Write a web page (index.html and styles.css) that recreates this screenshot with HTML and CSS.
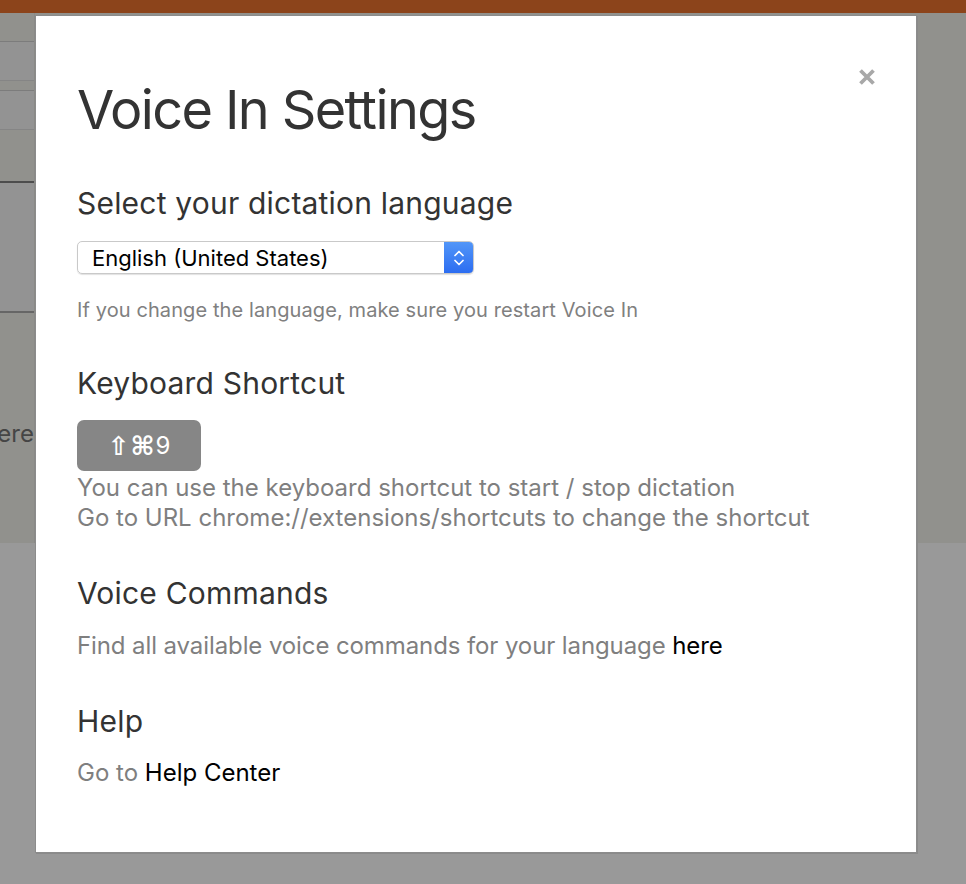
FILE: index.html
```html
<!DOCTYPE html>
<html lang="en">
<head>
<meta charset="utf-8">
<title>Voice In Settings</title>
<link rel="stylesheet" href="styles.css">
</head>
<body>
<div class="topbar"></div>
<div class="page">
  <div class="hero">
    <div class="side">
      <div class="field f1"></div>
      <div class="field f2"></div>
      <div class="panel"></div>
      <div class="sidetext"><span>Click here</span></div>
    </div>
  </div>
  <div class="lower"></div>
</div>

<div class="modal">
  <div class="modal-head">
    <h1 class="title">Voice In Settings</h1>
    <button class="close" aria-label="Close">
      <svg width="18" height="18" viewBox="0 0 18 18"><path d="M2.5 2.5L15.5 15.5M15.5 2.5L2.5 15.5" stroke="#a8a8a8" stroke-width="3.8" fill="none"/></svg>
    </button>
  </div>

  <section class="sec sec-lang">
    <h2 class="heading">Select your dictation language</h2>
    <div class="select">
      <span class="select-text">English (United States)</span>
      <span class="stepper">
        <svg width="14" height="22" viewBox="0 0 14 22"><path d="M3 8.5L7 4.5L11 8.5M3 13.5L7 17.5L11 13.5" stroke="#fff" stroke-width="1.7" fill="none" stroke-linecap="round" stroke-linejoin="round"/></svg>
      </span>
    </div>
    <p class="note">If you change the language, make sure you restart Voice In</p>
  </section>

  <section class="sec sec-key">
    <h2 class="heading">Keyboard Shortcut</h2>
    <div class="kbd"><span class="sym">⇧⌘</span>9</div>
    <p class="body">You can use the keyboard shortcut to start / stop dictation<br>Go to URL chrome://extensions/shortcuts to change the shortcut</p>
  </section>

  <section class="sec sec-cmd">
    <h2 class="heading">Voice Commands</h2>
    <p class="body">Find all available voice commands for your language <a class="link" href="#">here</a></p>
  </section>

  <section class="sec sec-help">
    <h2 class="heading">Help</h2>
    <p class="body">Go to <a class="link" href="#">Help Center</a></p>
  </section>
</div>
</body>
</html>
```

FILE: styles.css
```css
html, body {
  margin: 0;
  padding: 0;
}
body {
  background: #999999;
  font-family: Inter, "Liberation Sans", sans-serif;
  width: 966px;
  height: 884px;
  overflow: hidden;
  position: relative;
}
.topbar {
  height: 13px;
  background: #8c441b;
}
.page {
  display: flex;
  flex-direction: column;
}
.hero {
  height: 530px;
  background: #91918d;
}
.side {
  width: 34px;
  border-right: 1px solid #8a8a87;
  height: 100%;
  display: flex;
  flex-direction: column;
}
.field {
  background: #939393;
  border-top: 1px solid #7c7c7c;
  border-bottom: 1px solid #858585;
}
.f1 {
  margin-top: 28px;
  height: 38px;
}
.f2 {
  margin-top: 9px;
  height: 38px;
}
.panel {
  margin-top: 51px;
  height: 128px;
  background: #939393;
  border-top: 2px solid #4d4d4d;
  border-bottom: 2px solid #666666;
}
.sidetext {
  margin-top: 106px;
  display: flex;
  justify-content: flex-end;
  overflow: hidden;
  white-space: nowrap;
  font-size: 24px;
  line-height: 29px;
  color: #454545;
}
.lower {
  height: 341px;
}

.modal {
  position: absolute;
  left: 35px;
  top: 15px;
  width: 882px;
  height: 838px;
  background: #ffffff;
  border: 1px solid #8c8c8c;
  box-shadow: 1px 1px 0 #8a8a8a;
  box-sizing: border-box;
  padding: 0 40px 0 41px;
  color: #333333;
}
.modal-head {
  display: flex;
  justify-content: space-between;
  align-items: flex-start;
}
.title {
  margin: 62px 0 0;
  font-size: 54px;
  font-weight: 400;
  line-height: 64px;
  letter-spacing: -1.6px;
  color: #333333;
}
.close {
  margin: 52px 0 0 0;
  padding: 0;
  border: 0;
  background: none;
  width: 18px;
  height: 18px;
  display: flex;
}
.heading {
  margin: 0;
  font-size: 30px;
  font-weight: 400;
  line-height: 34px;
  letter-spacing: 0.2px;
  color: #333333;
}
.sec-lang {
  margin-top: 44px;
}
.select {
  margin-top: 21px;
  width: 397px;
  height: 33px;
  box-sizing: border-box;
  border: 1px solid #c9c9c9;
  border-radius: 5px;
  box-shadow: 0 1px 1px rgba(0,0,0,0.12);
  display: flex;
  align-items: center;
  justify-content: space-between;
  overflow: hidden;
}
.select-text {
  padding-left: 14px;
  font-size: 22px;
  color: #000;
}
.stepper {
  width: 29px;
  height: 100%;
  background: linear-gradient(#5296f8, #2c6df1);
  display: flex;
  align-items: center;
  justify-content: center;
}
.note {
  margin: 24px 0 0;
  font-size: 20px;
  line-height: 24px;
  letter-spacing: 0.1px;
  color: #808080;
}
.sec-key {
  margin-top: 44px;
}
.kbd {
  margin-top: 20px;
  width: 124px;
  height: 51px;
  border-radius: 7px;
  background: #868686;
  color: #fff;
  font-size: 24px;
  display: flex;
  align-items: center;
  justify-content: center;
}
.sym {
  font-family: "DejaVu Sans", sans-serif;
  font-size: 26px;
  font-weight: bold;
  letter-spacing: 1px;
}
.body {
  margin: 2px 0 0;
  font-size: 24px;
  line-height: 30px;
  color: #7f7f7f;
}
.sec-cmd {
  margin-top: 43px;
}
.sec-cmd .body {
  margin-top: 21px;
  letter-spacing: -0.1px;
}
.sec-help {
  margin-top: 43px;
}
.sec-help .body {
  margin-top: 20px;
}
.link {
  color: #000;
  text-decoration: none;
}
```
